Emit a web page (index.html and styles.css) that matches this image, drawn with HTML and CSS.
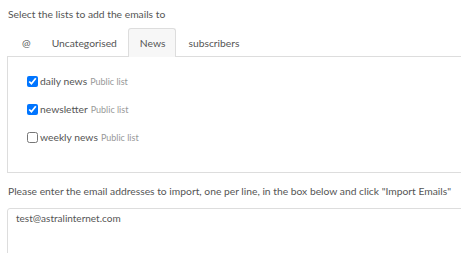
FILE: index.html
```html
<!DOCTYPE html>
<html lang="en">
<head>
    <meta charset="UTF-8">
    <meta name="viewport" content="width=device-width, initial-scale=1.0">
    <link rel="stylesheet" href="styles.css">
    <title>Import Emails</title>
</head>
<body>
    <div class="import-form">
        <p class="intro">Select the lists to add the emails to</p>
        <ul class="tabs">
            <li class="tab">@</li>
            <li class="tab">Uncategorised</li>
            <li class="tab active">News</li>
            <li class="tab">subscribers</li>
        </ul>
        <div class="tab-panel">
            <label class="list-row">
                <input type="checkbox" checked>
                <span class="list-name">daily news</span>
                <span class="list-type">Public list</span>
            </label>
            <label class="list-row">
                <input type="checkbox" checked>
                <span class="list-name">newsletter</span>
                <span class="list-type">Public list</span>
            </label>
            <label class="list-row">
                <input type="checkbox">
                <span class="list-name">weekly news</span>
                <span class="list-type">Public list</span>
            </label>
        </div>
        <p class="intro second">Please enter the email addresses to import, one per line, in the box below and click "Import Emails"</p>
        <textarea class="emails">test@astralinternet.com</textarea>
    </div>
</body>
</html>
```

FILE: styles.css
```css
body {
    margin: 0;
    font-family: 'Lato', sans-serif;
    font-size: 10.3px;
    color: #555;
    background-color: #fff;
    overflow: hidden;
}

.import-form {
    width: 480px;
    padding-left: 7px;
}

.intro {
    margin: 0;
    padding: 7px 0 0 1px;
    line-height: 14px;
    white-space: nowrap;
}

.intro.second {
    padding-top: 11px;
}

.tabs {
    list-style: none;
    margin: 7px 0 0;
    padding: 0 0 0 3px;
    display: flex;
    border-bottom: 1px solid #ddd;
}

.tab {
    padding: 7px 10px 7px 11px;
    line-height: 14px;
    border: 1px solid transparent;
    border-bottom: none;
    border-radius: 3px 3px 0 0;
    margin-bottom: -1px;
}

.tab:first-child {
    padding-right: 8px;
}

.tab.active {
    background-color: #f7f7f7;
    border-color: #ddd;
}

.tab-panel {
    border: 1px solid #ddd;
    border-top: none;
    padding: 17px 0 0 19px;
    display: flex;
    flex-direction: column;
    gap: 14px;
    box-sizing: border-box;
    height: 116px;
}

.list-row {
    display: flex;
    align-items: center;
    height: 14px;
}

.list-row input {
    margin: 0 2px 0 0;
    width: 11px;
    height: 11px;
}

.list-type {
    font-size: 9px;
    color: #999;
    margin-left: 3px;
}

.emails {
    display: block;
    margin-top: 10px;
    width: 100%;
    height: 80px;
    border: 1px solid #ddd;
    border-radius: 3px;
    padding: 3px 8px;
    font-family: inherit;
    font-size: 10px;
    color: #555;
    resize: none;
}
```
